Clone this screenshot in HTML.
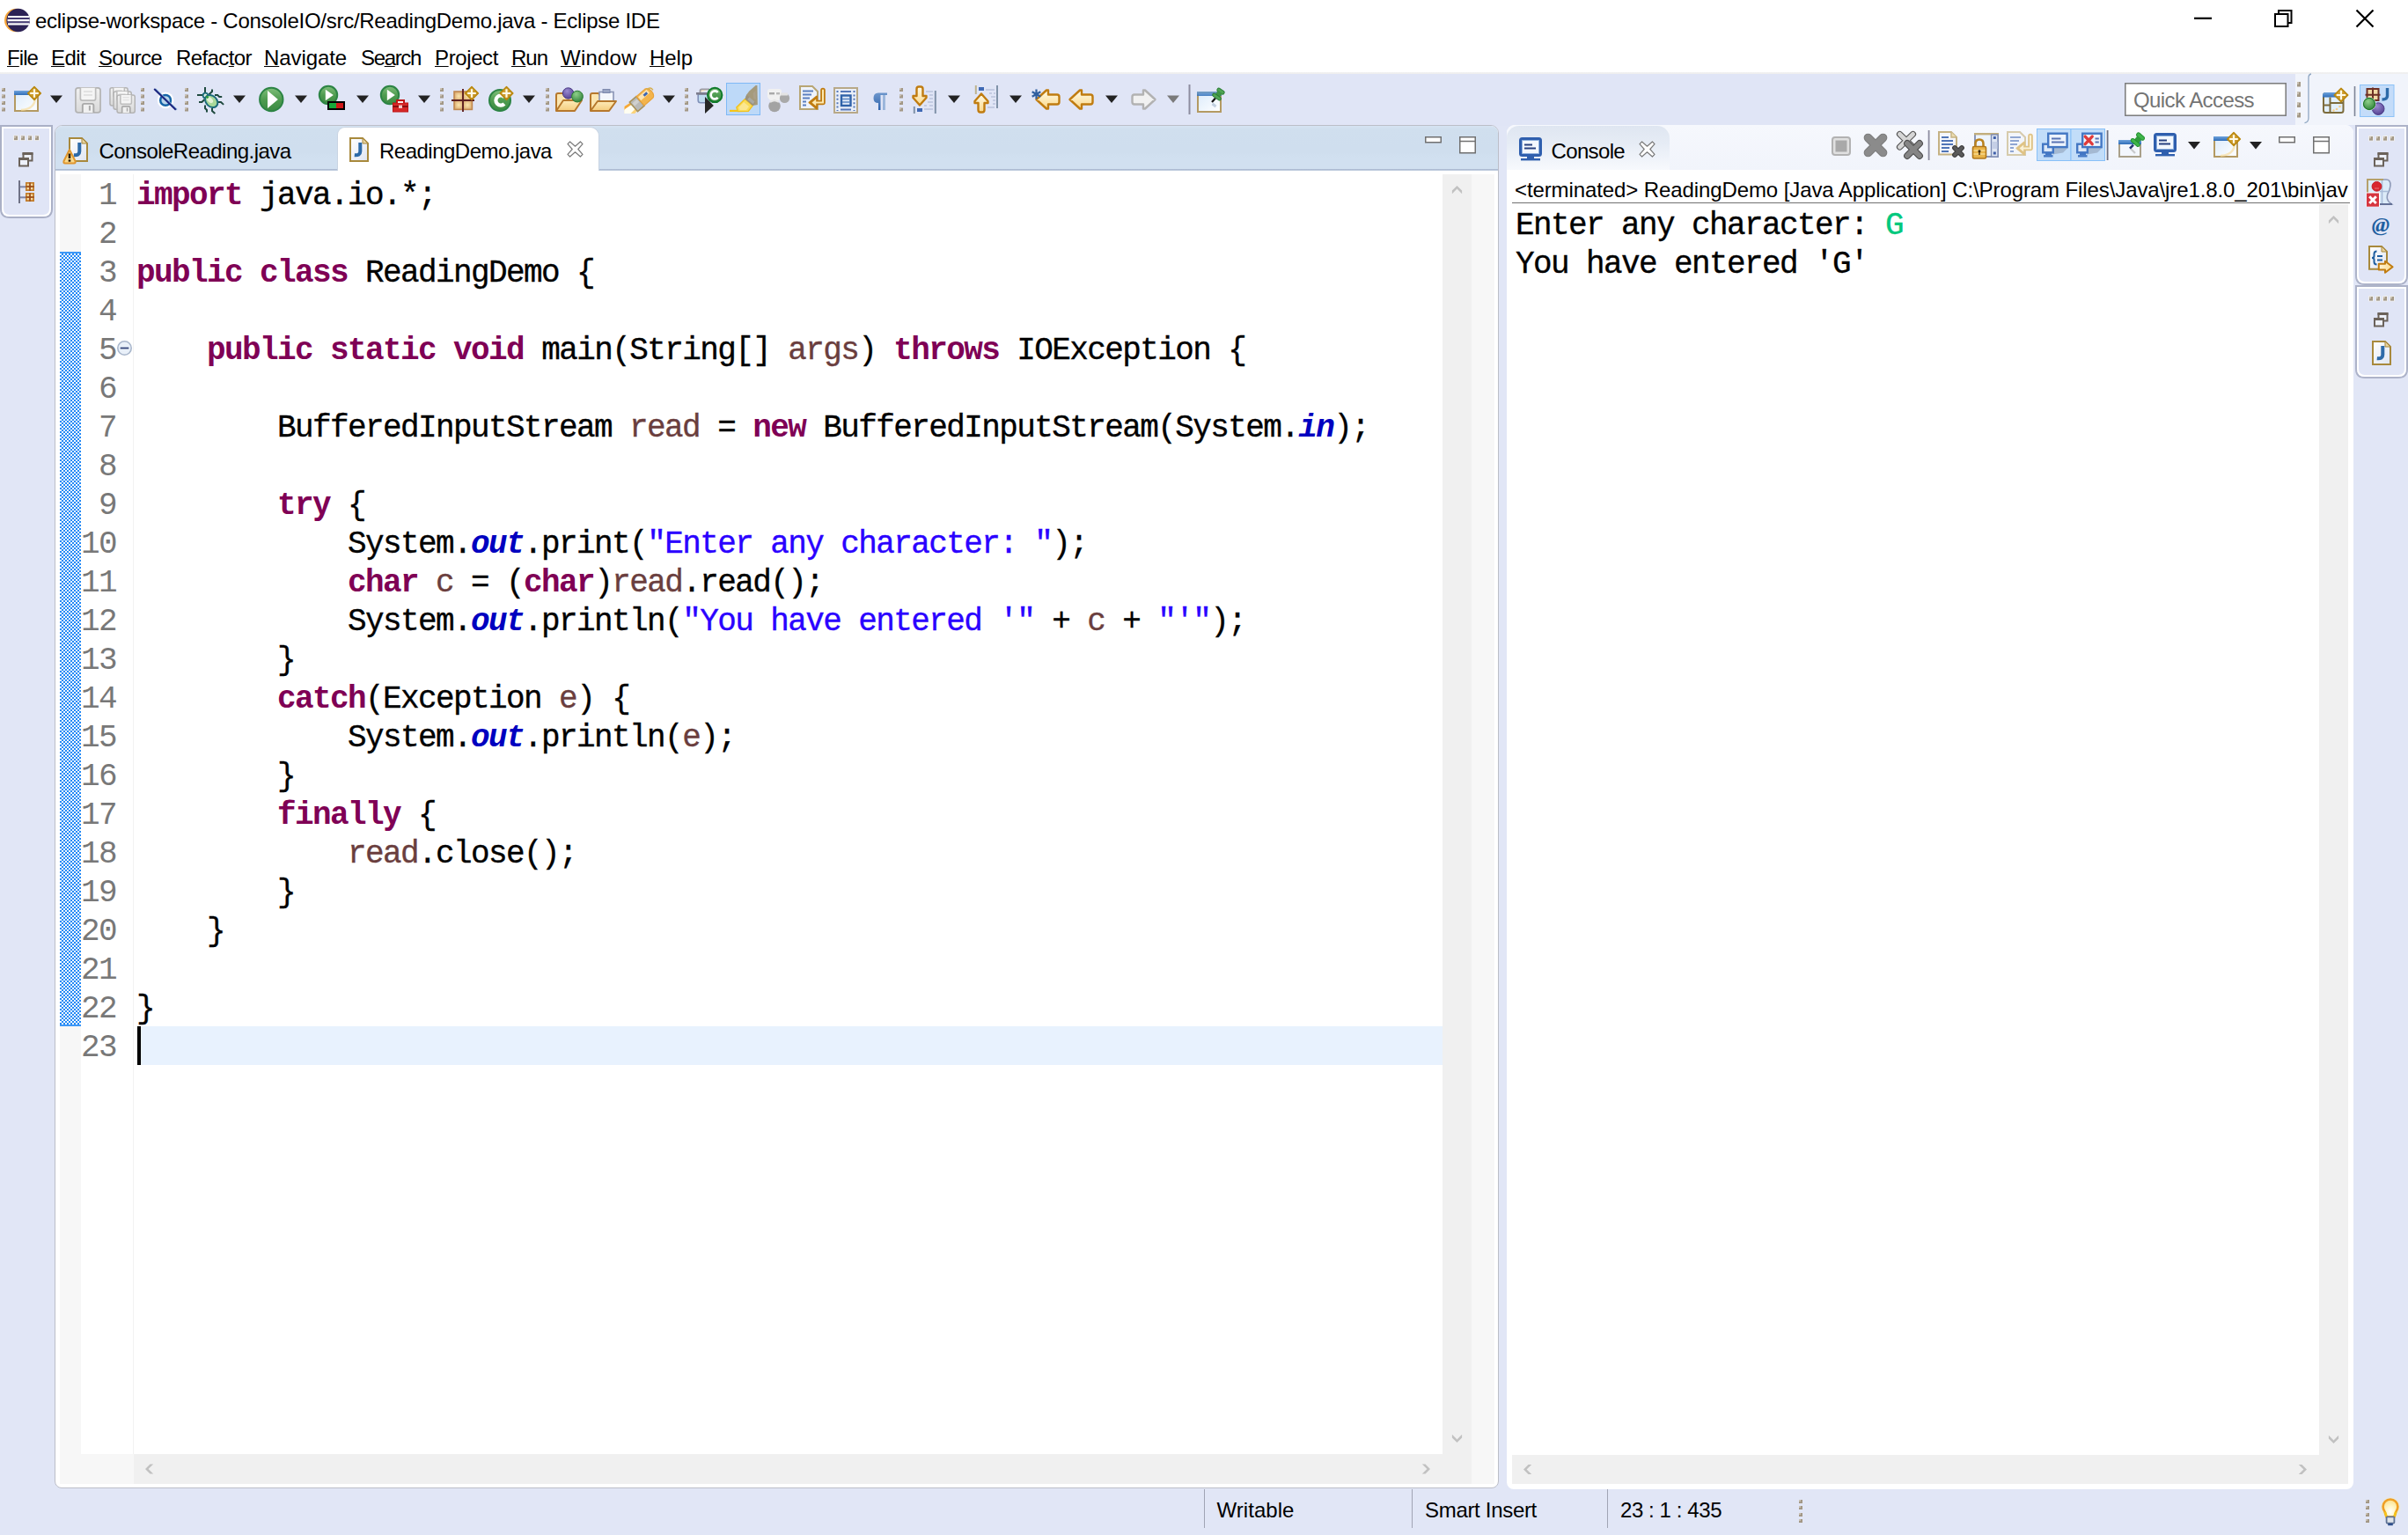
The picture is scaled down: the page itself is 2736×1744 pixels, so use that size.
<!DOCTYPE html>
<html><head><meta charset="utf-8"><title>eclipse-workspace - ConsoleIO/src/ReadingDemo.java - Eclipse IDE</title>
<style>
html,body{margin:0;padding:0;background:#E1E6F6;}
body{width:2736px;height:1744px;overflow:hidden;font-family:"Liberation Sans",sans-serif;}
#root{position:relative;width:2736px;height:1744px;overflow:hidden;background:#E1E6F6;}
.a{position:absolute;box-sizing:border-box;}
.t{position:absolute;white-space:pre;line-height:1;}
u{text-decoration:underline;text-decoration-thickness:1.4px;text-underline-offset:1.4px;}
.code{-webkit-text-stroke:0.35px currentColor;position:absolute;left:155px;white-space:pre;font-family:"Liberation Mono",monospace;font-size:36px;letter-spacing:-1.6px;line-height:44px;height:44px;color:#000;}
.ln{position:absolute;left:62px;width:70px;text-align:right;white-space:pre;font-family:"Liberation Mono",monospace;font-size:36px;letter-spacing:-1.6px;line-height:44px;height:44px;color:#787878;}
.k{color:#7F0055;font-weight:bold;-webkit-text-stroke:0;}
.s{color:#2A00FF;}
.v{color:#6A3E3E;}
.f{color:#0000C0;font-weight:bold;font-style:italic;-webkit-text-stroke:0;}

</style></head><body>
<div id="root">
<div class="a" style="left:0px;top:0px;width:2736px;height:44px;background:#fff;"></div>
<svg class="a" style="left:0px;top:6px" width="40" height="34" viewBox="0 6 40 34"><circle cx="18.2" cy="23" r="13.2" fill="#f6a63a"/><circle cx="20.6" cy="23" r="13.2" fill="#2c2255"/><path d="M9,19 H33 M8.5,23.2 H33.6 M9,27.4 H33" stroke="#fff" stroke-width="2.2"/><path d="M8,21.1 H33.6 M8,25.3 H33.6" stroke="#5a4f8a" stroke-width="1.2" opacity=".8"/></svg>
<span class="t" style="left:40.0px;top:11.7px;font-size:24px;color:#000;letter-spacing:-0.27px;">eclipse-workspace - ConsoleIO/src/ReadingDemo.java - Eclipse IDE</span>
<svg class="a" style="left:2480px;top:0px" width="256" height="44" viewBox="2480 0 256 44"><path d="M2493,20.8 H2513" stroke="#000" stroke-width="2.2"/><rect x="2585" y="16" width="14.5" height="14" fill="none" stroke="#000" stroke-width="2"/><path d="M2589,16 V12 H2603.5 V26 H2599.5" fill="none" stroke="#000" stroke-width="2"/><path d="M2677.5,11.5 L2696.5,30.5 M2696.5,11.5 L2677.5,30.5" stroke="#000" stroke-width="2.2"/></svg>
<div class="a" style="left:0px;top:44px;width:2736px;height:38px;background:#fff;"></div>
<span class="t" style="left:8px;top:53.7px;font-size:24px;letter-spacing:-0.92px"><u>F</u>ile</span>
<span class="t" style="left:58px;top:53.7px;font-size:24px;letter-spacing:-0.59px"><u>E</u>dit</span>
<span class="t" style="left:112px;top:53.7px;font-size:24px;letter-spacing:-0.67px"><u>S</u>ource</span>
<span class="t" style="left:200px;top:53.7px;font-size:24px;letter-spacing:-0.59px">Refac<u>t</u>or</span>
<span class="t" style="left:300px;top:53.7px;font-size:24px;letter-spacing:-0.09px"><u>N</u>avigate</span>
<span class="t" style="left:410px;top:53.7px;font-size:24px;letter-spacing:-1.34px">Se<u>a</u>rch</span>
<span class="t" style="left:494px;top:53.7px;font-size:24px;letter-spacing:-0.39px"><u>P</u>roject</span>
<span class="t" style="left:581px;top:53.7px;font-size:24px;letter-spacing:-1.01px"><u>R</u>un</span>
<span class="t" style="left:637px;top:53.7px;font-size:24px;letter-spacing:0.21px"><u>W</u>indow</span>
<span class="t" style="left:738px;top:53.7px;font-size:24px;letter-spacing:-0.09px"><u>H</u>elp</span>
<div class="a" style="left:0px;top:82px;width:2736px;height:61px;background:linear-gradient(#f1f1f1 0px,#efefef 1.6px,#E0E5F6 2.4px);"></div>
<svg class="a" style="left:0px;top:82px" width="2736" height="60" viewBox="0 82 2736 60"><defs>
<linearGradient id="gGreen" x1="0" y1="0" x2="0" y2="1"><stop offset="0" stop-color="#7fbf7a"/><stop offset=".5" stop-color="#4f9c50"/><stop offset="1" stop-color="#3b8a42"/></linearGradient>
<linearGradient id="gWin" x1="0" y1="0" x2="1" y2="1"><stop offset="0" stop-color="#dcebfb"/><stop offset="1" stop-color="#ffffff"/></linearGradient>
<linearGradient id="gYel" x1="0" y1="0" x2="0" y2="1"><stop offset="0" stop-color="#fffbe8"/><stop offset="1" stop-color="#fbd98a"/></linearGradient>
<linearGradient id="gYelH" x1="0" y1="0" x2="1" y2="0"><stop offset="0" stop-color="#fff6d8"/><stop offset="1" stop-color="#fbd98a"/></linearGradient>
<linearGradient id="gFold" x1="0" y1="0" x2="0" y2="1"><stop offset="0" stop-color="#fdebb8"/><stop offset="1" stop-color="#f5cd7d"/></linearGradient>
<linearGradient id="gGray" x1="0" y1="0" x2="0" y2="1"><stop offset="0" stop-color="#f1f1f1"/><stop offset="1" stop-color="#d9d9d9"/></linearGradient>
<linearGradient id="gBlueT" x1="0" y1="0" x2="0" y2="1"><stop offset="0" stop-color="#6ea3dc"/><stop offset="1" stop-color="#2f6db8"/></linearGradient>
<radialGradient id="gPkg" cx=".5" cy=".5" r=".75"><stop offset="0" stop-color="#fbe6ae"/><stop offset="1" stop-color="#d9a86c"/></radialGradient>
<linearGradient id="gGold" x1="0" y1="0" x2="1" y2="1"><stop offset="0" stop-color="#d9ac3c"/><stop offset="1" stop-color="#c08a1e"/></linearGradient>
<radialGradient id="gPurp" cx=".4" cy=".3" r=".8"><stop offset="0" stop-color="#9a8ad0"/><stop offset="1" stop-color="#4d3a8c"/></radialGradient>
<radialGradient id="gGrnB" cx=".4" cy=".3" r=".8"><stop offset="0" stop-color="#8fd08a"/><stop offset="1" stop-color="#2a7d34"/></radialGradient>
<linearGradient id="gPil" x1="0" y1="0" x2="0" y2="1"><stop offset="0" stop-color="#6e97cc"/><stop offset="1" stop-color="#2d62ad"/></linearGradient>
</defs><rect x="2" y="100" width="4" height="4" fill="#a39886"/><rect x="2" y="100" width="2.0" height="2.0" fill="#c9c0b2"/><rect x="2" y="107.5" width="4" height="4" fill="#a39886"/><rect x="2" y="107.5" width="2.0" height="2.0" fill="#c9c0b2"/><rect x="2" y="115" width="4" height="4" fill="#a39886"/><rect x="2" y="115" width="2.0" height="2.0" fill="#c9c0b2"/><rect x="2" y="122.5" width="4" height="4" fill="#a39886"/><rect x="2" y="122.5" width="2.0" height="2.0" fill="#c9c0b2"/><rect x="17" y="104" width="26" height="22" fill="url(#gWin)" stroke="#b49a62" stroke-width="2"/><rect x="16" y="103" width="28" height="5" fill="url(#gBlueT)"/><path d="M40,112 Q39,124 24,125" stroke="#f7dc9a" stroke-width="2.5" fill="none" opacity=".65"/><polygon points="39,98.6 46.4,106 39,113.4 31.6,106" fill="url(#gGold)" stroke="#b8860b" stroke-width="1.4" stroke-linejoin="round"/><path d="M39,101.19999999999999V110.80000000000001M34.2,106H43.8" stroke="#fffbe8" stroke-width="2.2" fill="none"/><polygon points="57,108.5 71,108.5 64.0,117.0" fill="#222"/><rect x="85.95" y="99.85" width="28.10" height="28.10" rx="2.88" fill="url(#gGray)" stroke="#b3b3b3" stroke-width="1.7"/><path d="M91.36,99.85 V112.11 Q91.36,114.10 93.34,114.10 H106.66 Q108.64,114.10 108.64,112.11 V99.85" fill="#f5f5f5" stroke="#bcbcbc" stroke-width="1.7"/><path d="M95.03,103.97 H104.97 M95.03,107.94 H104.97" stroke="#dcdcdc" stroke-width="1.39"/><path d="M93.84,127.95 V119.86 Q93.84,117.87 95.83,117.87 H104.37 Q106.36,117.87 106.36,119.86 V127.95" fill="#f0f0f0" stroke="#a9a9a9" stroke-width="1.9"/><rect x="100.89" y="120.06" width="1.99" height="5.56" fill="#a8a8a8"/><rect x="124.95" y="99.75" width="20.20" height="20.20" rx="2.24" fill="url(#gGray)" stroke="#b3b3b3" stroke-width="1.5"/><path d="M128.76,99.75 V108.55 Q128.76,109.99 130.20,109.99 H139.90 Q141.34,109.99 141.34,108.55 V99.75" fill="#f5f5f5" stroke="#bcbcbc" stroke-width="1.5"/><path d="M131.43,102.62 H138.67 M131.43,105.51 H138.67" stroke="#dcdcdc" stroke-width="1.01"/><path d="M130.57,119.95 V114.19 Q130.57,112.74 132.01,112.74 H138.23 Q139.68,112.74 139.68,114.19 V119.95" fill="#f0f0f0" stroke="#a9a9a9" stroke-width="1.7"/><rect x="135.70" y="114.33" width="1.45" height="4.05" fill="#a8a8a8"/><rect x="129.05" y="103.95" width="20.20" height="20.20" rx="2.24" fill="url(#gGray)" stroke="#b3b3b3" stroke-width="1.5"/><path d="M132.86,103.95 V112.75 Q132.86,114.19 134.30,114.19 H144.00 Q145.44,114.19 145.44,112.75 V103.95" fill="#f5f5f5" stroke="#bcbcbc" stroke-width="1.5"/><path d="M135.53,106.82 H142.77 M135.53,109.71 H142.77" stroke="#dcdcdc" stroke-width="1.01"/><path d="M134.67,124.15 V118.39 Q134.67,116.94 136.11,116.94 H142.33 Q143.78,116.94 143.78,118.39 V124.15" fill="#f0f0f0" stroke="#a9a9a9" stroke-width="1.7"/><rect x="139.80" y="118.53" width="1.45" height="4.05" fill="#a8a8a8"/><rect x="133.05" y="107.95" width="20.20" height="20.20" rx="2.24" fill="url(#gGray)" stroke="#b3b3b3" stroke-width="1.5"/><path d="M136.86,107.95 V116.75 Q136.86,118.19 138.30,118.19 H148.00 Q149.44,118.19 149.44,116.75 V107.95" fill="#f5f5f5" stroke="#bcbcbc" stroke-width="1.5"/><path d="M139.53,110.82 H146.77 M139.53,113.71 H146.77" stroke="#dcdcdc" stroke-width="1.01"/><path d="M138.67,128.15 V122.39 Q138.67,120.94 140.11,120.94 H146.33 Q147.78,120.94 147.78,122.39 V128.15" fill="#f0f0f0" stroke="#a9a9a9" stroke-width="1.7"/><rect x="143.80" y="122.53" width="1.45" height="4.05" fill="#a8a8a8"/><rect x="160" y="100" width="4" height="4" fill="#a39886"/><rect x="160" y="100" width="2.0" height="2.0" fill="#c9c0b2"/><rect x="160" y="107.5" width="4" height="4" fill="#a39886"/><rect x="160" y="107.5" width="2.0" height="2.0" fill="#c9c0b2"/><rect x="160" y="115" width="4" height="4" fill="#a39886"/><rect x="160" y="115" width="2.0" height="2.0" fill="#c9c0b2"/><rect x="160" y="122.5" width="4" height="4" fill="#a39886"/><rect x="160" y="122.5" width="2.0" height="2.0" fill="#c9c0b2"/><circle cx="188.1" cy="113.9" r="9.3" fill="#fff"/><circle cx="188.1" cy="113.9" r="5.9" fill="#b8d4ea" stroke="#1565a8" stroke-width="2.5"/><path d="M176.6,101 L201,124.6" stroke="#8ab4d8" stroke-width="1.6"/><path d="M175.2,101 L199.8,124.7" stroke="#1a237e" stroke-width="2"/><rect x="210" y="100" width="4" height="4" fill="#a39886"/><rect x="210" y="100" width="2.0" height="2.0" fill="#c9c0b2"/><rect x="210" y="107.5" width="4" height="4" fill="#a39886"/><rect x="210" y="107.5" width="2.0" height="2.0" fill="#c9c0b2"/><rect x="210" y="115" width="4" height="4" fill="#a39886"/><rect x="210" y="115" width="2.0" height="2.0" fill="#c9c0b2"/><rect x="210" y="122.5" width="4" height="4" fill="#a39886"/><rect x="210" y="122.5" width="2.0" height="2.0" fill="#c9c0b2"/><g stroke="#1f4a3f" stroke-width="2" fill="none" stroke-linecap="square" stroke-linejoin="miter"><path d="M233,100 V105"/><path d="M241,102.4 V104 L238.2,106.6"/><path d="M225,108 H230"/><path d="M227,116 H229.4 L232,113.4"/><path d="M233,120.4 V123 L235,125 V126.4"/><path d="M241,124 V126 L243.6,128.4"/><path d="M245,108 H247.2 L249.2,110 H251.2"/><path d="M248.6,116 H251 L253.4,118.2"/></g><circle cx="233.4" cy="108.4" r="2.8" fill="#dfeee0" stroke="#1d6b7a" stroke-width="1.8"/><ellipse cx="240.2" cy="115" rx="8" ry="6.1" transform="rotate(44 240.2 115)" fill="#a9d99a" stroke="#1d6b7a" stroke-width="2"/><ellipse cx="238.4" cy="113.4" rx="4.4" ry="2.6" transform="rotate(44 238.4 113.4)" fill="#e9f3dc" opacity=".9"/><path d="M234.4,109.4 L236.6,111.2" stroke="#2a9a3c" stroke-width="2.4"/><polygon points="265,108.5 279,108.5 272.0,117.0" fill="#222"/><circle cx="308.3" cy="113" r="13.2" fill="url(#gGreen)" stroke="#2c8444" stroke-width="2"/><polygon points="304.0,103 304.0,123 315.90000000000003,113" fill="#fff"/><polygon points="335,108.5 349,108.5 342.0,117.0" fill="#222"/><circle cx="373" cy="108" r="10.2" fill="url(#gGreen)" stroke="#2c8444" stroke-width="2"/><polygon points="369.8,101.7 369.8,114.3 378.8,108" fill="#fff"/><rect x="373" y="116" width="18" height="8" fill="#d01818" stroke="#000" stroke-width="2"/><rect x="374" y="117" width="8" height="6" fill="#18a83a"/><polygon points="405,108.5 419,108.5 412.0,117.0" fill="#222"/><circle cx="443" cy="108" r="10.2" fill="url(#gGreen)" stroke="#2c8444" stroke-width="2"/><polygon points="439.8,101.7 439.8,114.3 448.8,108" fill="#fff"/><rect x="446.5" y="117" width="17" height="10" fill="#d62828" stroke="#c01616" stroke-width="1"/><path d="M451,117 V114 H459 V117" stroke="#c01616" stroke-width="2" fill="#fbeaea"/><path d="M446.5,121 H463.5" stroke="#8a0f0f" stroke-width="2"/><rect x="453" y="119.5" width="4" height="3.5" fill="#f4c6c6"/><polygon points="475,108.5 489,108.5 482.0,117.0" fill="#222"/><rect x="500" y="100" width="4" height="4" fill="#a39886"/><rect x="500" y="100" width="2.0" height="2.0" fill="#c9c0b2"/><rect x="500" y="107.5" width="4" height="4" fill="#a39886"/><rect x="500" y="107.5" width="2.0" height="2.0" fill="#c9c0b2"/><rect x="500" y="115" width="4" height="4" fill="#a39886"/><rect x="500" y="115" width="2.0" height="2.0" fill="#c9c0b2"/><rect x="500" y="122.5" width="4" height="4" fill="#a39886"/><rect x="500" y="122.5" width="2.0" height="2.0" fill="#c9c0b2"/><rect x="516" y="104" width="20.4" height="20.4" fill="#d9a86c" stroke="#c08850" stroke-width="1.6"/><rect x="517.2" y="105.2" width="8" height="8" fill="url(#gPkg)"/><rect x="527" y="105.2" width="8.4" height="8" fill="url(#gPkg)"/><rect x="517.2" y="115" width="8" height="8.4" fill="url(#gPkg)"/><rect x="527" y="115" width="8.4" height="8.4" fill="url(#gPkg)"/><path d="M526,101 V127 M513,114 H539" stroke="#5e2020" stroke-width="1.9"/><polygon points="536,98.6 543.4,106 536,113.4 528.6,106" fill="url(#gGold)" stroke="#b8860b" stroke-width="1.4" stroke-linejoin="round"/><path d="M536,101.19999999999999V110.80000000000001M531.2,106H540.8" stroke="#fffbe8" stroke-width="2.2" fill="none"/><circle cx="568" cy="114" r="12" fill="url(#gGreen)" stroke="#2c8444" stroke-width="2"/><path d="M573,110.2 A5.6,5.6 0 1 0 573,118" stroke="#fff" stroke-width="4.2" fill="none"/><polygon points="575.5,98.6 582.9,106 575.5,113.4 568.1,106" fill="url(#gGold)" stroke="#b8860b" stroke-width="1.4" stroke-linejoin="round"/><path d="M575.5,101.19999999999999V110.80000000000001M570.7,106H580.3" stroke="#fffbe8" stroke-width="2.2" fill="none"/><polygon points="594,108.5 608,108.5 601.0,117.0" fill="#222"/><rect x="620" y="100" width="4" height="4" fill="#a39886"/><rect x="620" y="100" width="2.0" height="2.0" fill="#c9c0b2"/><rect x="620" y="107.5" width="4" height="4" fill="#a39886"/><rect x="620" y="107.5" width="2.0" height="2.0" fill="#c9c0b2"/><rect x="620" y="115" width="4" height="4" fill="#a39886"/><rect x="620" y="115" width="2.0" height="2.0" fill="#c9c0b2"/><rect x="620" y="122.5" width="4" height="4" fill="#a39886"/><rect x="620" y="122.5" width="2.0" height="2.0" fill="#c9c0b2"/><path d="M632,126 V108 Q632,106 634,106 H641 L643,109 H654 V114" fill="#fbe6b0" stroke="#b6782c" stroke-width="2" stroke-linejoin="round"/><path d="M632,126 L640,114 H661 L653,126 Z" fill="url(#gFold)" stroke="#b6782c" stroke-width="2" stroke-linejoin="round"/><circle cx="645.6" cy="106" r="6.2" fill="url(#gPurp)" stroke="#4a3a86" stroke-width="1"/><circle cx="656" cy="109.6" r="6.4" fill="url(#gGrnB)" stroke="#2b7a35" stroke-width="1"/><path d="M671,126 V108 Q671,106 673,106 H680 L682,109 H692 V114" fill="#fbe6b0" stroke="#b6782c" stroke-width="2" stroke-linejoin="round"/><rect x="681" y="104.5" width="16" height="11" fill="#f4f7fc" stroke="#8a94b4" stroke-width="1.6"/><rect x="685" y="101.5" width="8" height="4" fill="#9aa6c4" stroke="#7d89ad" stroke-width="1"/><path d="M671,126 L679,115 H700 L692,126 Z" fill="url(#gFold)" stroke="#b6782c" stroke-width="2" stroke-linejoin="round"/><clipPath id="cpFl"><rect x="709.5" y="98" width="34" height="31"/></clipPath><g clip-path="url(#cpFl)"><g transform="translate(727.5,114.8) rotate(-41)"><path d="M-10,-6 L-30,-9 V9 L-10,6 Z" fill="#fff3c0"/><path d="M-10,-6 L-30,-9 V-5 L-10,-3 Z" fill="#f6a838"/><path d="M-10,-3.5 L-30,-5.5 V4 L-10,3Z" fill="#fffef2"/><path d="M-10,3 L-30,5 V9 L-10,6Z" fill="#fbd27a"/><rect x="-10" y="-7" width="10" height="14" fill="#b9b9b7" stroke="#a8925c" stroke-width="1.6"/><rect x="-8.5" y="-4" width="7" height="4" fill="#d0d0ce"/><path d="M0,-6.8 H13 Q17,-6 17,0 Q17,6 13,6.8 H0 Z" fill="#f3b44c" stroke="#e8a23a" stroke-width="1.2"/><path d="M1,-2.5 H14" stroke="#fde3b0" stroke-width="5"/><rect x="7" y="-3.4" width="5" height="2.8" fill="#3d66b4"/><path d="M14,-5 Q20,-5 19,0" stroke="#d6b050" stroke-width="1.6" fill="none"/></g></g><polygon points="753,108.5 767,108.5 760.0,117.0" fill="#222"/><rect x="778" y="100" width="4" height="4" fill="#a39886"/><rect x="778" y="100" width="2.0" height="2.0" fill="#c9c0b2"/><rect x="778" y="107.5" width="4" height="4" fill="#a39886"/><rect x="778" y="107.5" width="2.0" height="2.0" fill="#c9c0b2"/><rect x="778" y="115" width="4" height="4" fill="#a39886"/><rect x="778" y="115" width="2.0" height="2.0" fill="#c9c0b2"/><rect x="778" y="122.5" width="4" height="4" fill="#a39886"/><rect x="778" y="122.5" width="2.0" height="2.0" fill="#c9c0b2"/><path d="M795.5,105 V103 Q795.5,101.4 797.5,101.4 H806" stroke="#9a9aa2" stroke-width="1.8" fill="#f4e3c8"/><path d="M793.2,107 H806 V116.7 H796 Q793.2,116.7 793.2,114 Z" fill="#c0dcf0" stroke="#8090b8" stroke-width="1.6"/><rect x="791" y="105" width="16" height="2.6" fill="#7c7c8c"/><polygon points="801,110 801,128.9 810.9,119.9" fill="#262626"/><circle cx="812.2" cy="107.9" r="8.2" fill="url(#gGreen)" stroke="#0f7a2a" stroke-width="2"/><path d="M815.6,105 A4.5,4.5 0 1 0 815.6,110.8" stroke="#fff" stroke-width="2.7" fill="none"/><rect x="825.5" y="94.5" width="38" height="36" fill="#bdd9f8" stroke="#7fb9f6" stroke-width="1"/><path d="M829,125.9 H839" stroke="#f5c518" stroke-width="2.2"/><polygon points="846.5,112.4 855.3,119.9 850.3,126.4 838.3,126.6 836.8,121.9" fill="#f9dc58" stroke="#f2c21c" stroke-width="1.4" stroke-linejoin="round"/><polygon points="845,116 851,121 848,125 840.5,125 839.5,122" fill="#fce99a" opacity=".85"/><polygon points="860.4,97 860.8,119 855.3,119.9 846.5,112.4 848.3,107.6 851.3,103.6 858.6,97" fill="#a59a7c"/><polygon points="848.3,107.6 846.5,112.4 855.3,119.9 858.2,116.6" fill="#9b927a"/><polygon points="851.5,110.2 849.3,112.9 855.6,118.2 857.4,115.6" fill="#a9a9a2"/><polygon points="855.5,106 858.5,103 859,113 856.5,112" fill="#aaa08a"/><path d="M872,104 Q872,101 875,101 H885 Q888,101 888,104 V110 Q886,115 880,115 Q874,115 872,110Z" fill="#f1f1f1"/><rect x="874" y="105" width="6" height="2.4" fill="#a9a9a9"/><rect x="882" y="105" width="4" height="2.4" fill="#b9b9b9"/><circle cx="880" cy="120.5" r="6.8" fill="#a3a3a3"/><path d="M875,116 Q880,112.5 885,116" stroke="#e6e6e6" stroke-width="2" fill="none"/><circle cx="891.5" cy="111.5" r="5.6" fill="#a9a9a9"/><rect x="887" y="105.5" width="8" height="3" fill="#e4e4e4"/><path d="M909,98 H923 L929,104 V124 H909 Z" fill="#eef3fb" stroke="#b8a674" stroke-width="2"/><path d="M912,103.5 H924 M912,107.5 H922 M912,111.5 H920 M912,115.5 H916 M912,119.5 H916" stroke="#5a7fc0" stroke-width="2"/><path d="M935,102.5 V116.5 H928 M935,102.5" stroke="#c07c10" stroke-width="5.6" fill="none" stroke-linejoin="round" stroke-linecap="round"/><polygon points="919.5,116.5 928,109.5 928,123.5" fill="#c07c10" stroke="#c07c10" stroke-width="2" stroke-linejoin="round"/><path d="M935,102.5 V116.5 H927" stroke="#fde9b0" stroke-width="2" fill="none" stroke-linecap="round"/><polygon points="922.5,116.5 927.2,112.6 927.2,120.4" fill="#fde9b0"/><rect x="948" y="100" width="26" height="28" fill="#e9eef8" stroke="#b8a988" stroke-width="2"/><rect x="956" y="108.5" width="10.5" height="11.5" fill="#dfe9f7" stroke="#2f62a8" stroke-width="2.4"/><path d="M957,112.5 H966 M957,116 H966" stroke="#5b86c4" stroke-width="1.6"/><path d="M955,104 H967 M955,124.5 H967" stroke="#5577b8" stroke-width="2"/><path d="M951.5,103 V126 M970.5,103 V126" stroke="#5577b8" stroke-width="2" stroke-dasharray="2 2.4"/><path d="M1008,105.5 H998 Q992.5,105.5 992.5,111.5 Q992.5,117 998,117 V125 H1000.5 V108 H1003.5 V125 H1006 V108 H1008 Z" fill="url(#gPil)"/><rect x="1003.5" y="108" width="2.5" height="17" fill="#9db8dc"/><rect x="1022" y="100" width="4" height="4" fill="#a39886"/><rect x="1022" y="100" width="2.0" height="2.0" fill="#c9c0b2"/><rect x="1022" y="107.5" width="4" height="4" fill="#a39886"/><rect x="1022" y="107.5" width="2.0" height="2.0" fill="#c9c0b2"/><rect x="1022" y="115" width="4" height="4" fill="#a39886"/><rect x="1022" y="115" width="2.0" height="2.0" fill="#c9c0b2"/><rect x="1022" y="122.5" width="4" height="4" fill="#a39886"/><rect x="1022" y="122.5" width="2.0" height="2.0" fill="#c9c0b2"/><path d="M1045.0,119.5 L1037.5,111 L1037.5,109 L1041.5,109 L1041.5,101 Q1041.5,98.5 1044,98.5 L1046,98.5 Q1048.5,98.5 1048.5,101 L1048.5,109 L1052.5,109 L1052.5,111 Z" fill="url(#gYel)" stroke="#c07c10" stroke-width="2.4" stroke-linejoin="round"/><path d="M1052,104 H1060 M1056,108 H1060 M1056,112 H1060 M1054,116 H1060 M1050,120 H1053 M1056,120 H1060 M1050,124 H1060" stroke="#c3cbe2" stroke-width="2"/><rect x="1061.8" y="103" width="2" height="26" fill="#8092a8"/><rect x="1037.8" y="121" width="2" height="8" fill="#8092a8"/><rect x="1042" y="123" width="6" height="4" fill="#3f69b4"/><polygon points="1077,108.5 1091,108.5 1084.0,117.0" fill="#222"/><path d="M1120,102 H1130 M1124,106 H1127 M1129,106 H1131 M1126,110 H1131 M1128,114 H1131 M1128,118 H1131 M1122,122 H1130" stroke="#c3cbe2" stroke-width="2"/><rect x="1132" y="97" width="2" height="26" fill="#8092a8"/><rect x="1107.8" y="97" width="2" height="10" fill="#bdb38e"/><rect x="1112" y="99" width="6" height="4" fill="#3f69b4"/><path d="M1115.0,106.5 L1107.5,115 L1107.5,117 L1111.5,117 L1111.5,125 Q1111.5,127.5 1114,127.5 L1116,127.5 Q1118.5,127.5 1118.5,125 L1118.5,117 L1122.5,117 L1122.5,115 Z" fill="url(#gYel)" stroke="#c07c10" stroke-width="2.4" stroke-linejoin="round"/><polygon points="1147,108.5 1161,108.5 1154.0,117.0" fill="#222"/><path d="M1177.5,113.0 L1189,102.5 L1191,102.5 L1191,107.5 L1201,107.5 Q1203.5,107.5 1203.5,110 L1203.5,116 Q1203.5,118.5 1201,118.5 L1191,118.5 L1191,123.5 L1189,123.5 Z" fill="url(#gYel)" stroke="#c07c10" stroke-width="2.4" stroke-linejoin="round"/><path d="M1177.5,101.5 V112.5 M1172.7,104.2 L1182.3,109.8 M1182.3,104.2 L1172.7,109.8" stroke="#2f5f9f" stroke-width="2.2"/><path d="M1215.5,113.0 L1227,102.5 L1229,102.5 L1229,107.5 L1239,107.5 Q1241.5,107.5 1241.5,110 L1241.5,116 Q1241.5,118.5 1239,118.5 L1229,118.5 L1229,123.5 L1227,123.5 Z" fill="url(#gYel)" stroke="#c07c10" stroke-width="2.4" stroke-linejoin="round"/><polygon points="1256,108.5 1270,108.5 1263.0,117.0" fill="#222"/><path d="M1312.5,113.0 L1301,102.5 L1299,102.5 L1299,107.5 L1289,107.5 Q1286.5,107.5 1286.5,110 L1286.5,116 Q1286.5,118.5 1289,118.5 L1299,118.5 L1299,123.5 L1301,123.5 Z" fill="#f1f1f1" stroke="#b2b2b2" stroke-width="2.4" stroke-linejoin="round"/><polygon points="1326,108.5 1340,108.5 1333.0,117.0" fill="#7a7a7a"/><rect x="1350.5" y="96" width="2" height="34" fill="#8d8da0"/><rect x="1361" y="105" width="26" height="22" fill="url(#gWin)" stroke="#b49a62" stroke-width="2"/><rect x="1360" y="104" width="28" height="5" fill="url(#gBlueT)" opacity=".85"/><path d="M1377,116 L1381,111.5" stroke="#111" stroke-width="2.2"/><path d="M1377.5,118 L1381.5,121" stroke="#9fb4cc" stroke-width="3" opacity=".6"/><g transform="rotate(35 1385 106.5)"><rect x="1380.5" y="101" width="9" height="4" rx="2" fill="#4fa552" stroke="#2a7d34" stroke-width="1"/><rect x="1382" y="104.5" width="6" height="5" fill="#3f9444"/><rect x="1379.5" y="109" width="11" height="3.6" rx="1.8" fill="#4fa552" stroke="#2a7d34" stroke-width="1"/></g><rect x="2608" y="84" width="128" height="58" fill="#f1f4fb"/><rect x="2414.8" y="94.8" width="182.4" height="36.4" fill="#fff" stroke="#7a7a7a" stroke-width="1.5"/><rect x="2610" y="93" width="4" height="5.5" fill="#a39886"/><rect x="2610" y="93" width="2.0" height="2.75" fill="#c9c0b2"/><rect x="2610" y="104.5" width="4" height="5.5" fill="#a39886"/><rect x="2610" y="104.5" width="2.0" height="2.75" fill="#c9c0b2"/><rect x="2610" y="116.5" width="4" height="5.5" fill="#a39886"/><rect x="2610" y="116.5" width="2.0" height="2.75" fill="#c9c0b2"/><rect x="2610" y="128" width="4" height="5.5" fill="#a39886"/><rect x="2610" y="128" width="2.0" height="2.75" fill="#c9c0b2"/><path d="M2626,84 Q2623,84.5 2623,88.5 V134 Q2623,139 2618.5,139.6" stroke="#8fa6c2" stroke-width="1.3" fill="none"/><rect x="2640" y="106" width="22.5" height="22" rx="2.5" fill="#e2f0fc" stroke="#7d6c3c" stroke-width="2"/><path d="M2639,110.5 V108 Q2639,105 2642,105 H2656 V110.5 Z" fill="url(#gBlueT)"/><path d="M2647.5,110.5 V128 M2640,119.5 H2647.5 M2647.5,117 H2662" stroke="#7d6c3c" stroke-width="2"/><circle cx="2651.5" cy="125.5" r="1.2" fill="#f6cf8e"/><circle cx="2655" cy="124" r="1.3" fill="#f6cf8e"/><circle cx="2658.5" cy="121" r="1.3" fill="#f6cf8e"/><polygon points="2660,100.2 2667.8,108 2660,115.8 2652.2,108" fill="url(#gGold)" stroke="#b8860b" stroke-width="1.4" stroke-linejoin="round"/><path d="M2660,102.8V113.2M2654.7999999999997,108H2665.2000000000003" stroke="#fffbe8" stroke-width="2.2" fill="none"/><rect x="2674.7" y="98" width="1.6" height="34" fill="#7d8496"/><rect x="2681.5" y="96.5" width="38.5" height="36" fill="#c4dcf9" stroke="#8cc2f8" stroke-width="1"/><rect x="2689.5" y="101" width="13" height="13" fill="#f2d9a4" stroke="#6d2f24" stroke-width="2"/><path d="M2696,99.5 V114 M2687.5,107.8 H2704.5" stroke="#6d2f24" stroke-width="2"/><path d="M2712.5,100 V109 Q2712.5,113 2706.5,113" stroke="#2d6aa8" stroke-width="3.4" fill="none"/><circle cx="2702.2" cy="123.6" r="6.8" fill="url(#gPurp)" stroke="#4a3a86" stroke-width="1"/><circle cx="2692" cy="118" r="7.6" fill="#fff"/><circle cx="2692" cy="118" r="6.6" fill="url(#gGrnB)" stroke="#1f7a2c" stroke-width="1.2"/></svg><span class="t" style="left:2424.0px;top:101.7px;font-size:24px;color:#747474;letter-spacing:-0.59px;">Quick Access</span>
<svg class="a" style="left:0px;top:140px" width="62" height="110" viewBox="0 140 62 110"><path d="M1.0,143.0 H59.0 V237.0 Q59.0,247.0 49.0,247.0 H11.0 Q1.0,247.0 1.0,237.0 Z" fill="#e0e5f6" stroke="#aab0c6" stroke-width="2"/><path d="M3,145 H57 V237 Q57,245 49,245 H11 Q3,245 3,237 Z" fill="none" stroke="#fff" stroke-width="2"/><rect x="15" y="153.5" width="6" height="6.5" fill="#f1f0ee" opacity=".8"/><rect x="16" y="154.5" width="4" height="4.6" fill="#a39886"/><rect x="16" y="154.5" width="2" height="2.3" fill="#c9c0b2"/><rect x="23" y="153.5" width="6" height="6.5" fill="#f1f0ee" opacity=".8"/><rect x="24" y="154.5" width="4" height="4.6" fill="#a39886"/><rect x="24" y="154.5" width="2" height="2.3" fill="#c9c0b2"/><rect x="31" y="153.5" width="6" height="6.5" fill="#f1f0ee" opacity=".8"/><rect x="32" y="154.5" width="4" height="4.6" fill="#a39886"/><rect x="32" y="154.5" width="2" height="2.3" fill="#c9c0b2"/><rect x="39" y="153.5" width="6" height="6.5" fill="#f1f0ee" opacity=".8"/><rect x="40" y="154.5" width="4" height="4.6" fill="#a39886"/><rect x="40" y="154.5" width="2" height="2.3" fill="#c9c0b2"/><rect x="26.5" y="174.5" width="10" height="8" fill="#eef1fa" stroke="#6b625a" stroke-width="2"/><rect x="25.5" y="173" width="12" height="3" fill="#6b625a"/><rect x="22" y="180.5" width="10" height="8" fill="#eef1fa" stroke="#6b625a" stroke-width="2"/><rect x="21" y="179" width="12" height="3" fill="#6b625a"/><rect x="21" y="205" width="2" height="26" fill="#6f7286"/><rect x="23" y="211.3" width="6" height="2" fill="#7f86a4"/><rect x="23" y="223.3" width="6" height="2" fill="#7f86a4"/><rect x="29" y="207" width="10" height="10" fill="#c27d2c"/><rect x="30.7" y="208.7" width="2.2" height="2.2" fill="#f6dca8"/><rect x="35" y="208.7" width="2.2" height="2.2" fill="#f6dca8"/><rect x="30.7" y="213" width="2.2" height="2.2" fill="#f6dca8"/><rect x="35" y="213" width="2.2" height="2.2" fill="#f6dca8"/><path d="M34,207 V217 M29,212 H39" stroke="#8a3d1c" stroke-width="1"/><rect x="29" y="219" width="10" height="10" fill="#c27d2c"/><rect x="30.7" y="220.7" width="2.2" height="2.2" fill="#f6dca8"/><rect x="35" y="220.7" width="2.2" height="2.2" fill="#f6dca8"/><rect x="30.7" y="225" width="2.2" height="2.2" fill="#f6dca8"/><rect x="35" y="225" width="2.2" height="2.2" fill="#f6dca8"/><path d="M34,219 V229 M29,224 H39" stroke="#8a3d1c" stroke-width="1"/></svg>
<div class="a" style="left:62px;top:142px;width:1641px;height:1549px;background:#fff;border:1px solid #bcbec8;border-radius:9px 9px 8px 8px;overflow:hidden;"><div class="a" style="left:0px;top:0px;width:1639px;height:51px;background:linear-gradient(#d6e3f2 0px,#D0DFEE 4px,#CFDEEE 22px,#CFDEEE 30px,#D1E0F0 36px,#D1E0F0 48.6px,#adbbd2 49.4px,#b0bed5 50.3px,#e3ebf5 51px);"></div></div>
<svg class="a" style="left:70px;top:154px" width="34" height="34" viewBox="70 154 34 34"><defs><linearGradient id="gPage" x1="0" y1="0" x2="1" y2="1"><stop offset="0" stop-color="#ffffff"/><stop offset="1" stop-color="#dfe5f2"/></linearGradient></defs><path d="M79,157 H93 L99,163 V183 H79 Z" fill="url(#gPage)" stroke="#a8893c" stroke-width="2" stroke-linejoin="miter"/><path d="M93,157 V163 H99 Z" fill="#e8d3a0" stroke="#a8893c" stroke-width="1"/><path d="M90.3,162 V172 Q90.3,176.8 83.8,176.2" stroke="#2d6aa8" stroke-width="4" fill="none"/><path d="M79,170 L85.5,183 Q86.2,185.5 84,185.5 H74 Q71.8,185.5 72.5,183 Z" fill="#f9d98a" stroke="#e0962e" stroke-width="2" stroke-linejoin="round"/><path d="M79,174.5 V180" stroke="#2a1a00" stroke-width="2.6"/><rect x="77.7" y="181.3" width="2.6" height="2.4" fill="#2a1a00"/></svg>
<span class="t" style="left:112.5px;top:159.7px;font-size:24px;color:#000;letter-spacing:-0.53px;">ConsoleReading.java</span>
<div class="a" style="left:382.5px;top:143.5px;width:298.5px;height:50.6px;background:#fff;border-radius:9px 10px 0 0;border:1px solid #c9d4e3;border-bottom:none;"></div>
<svg class="a" style="left:389px;top:154px" width="34" height="34" viewBox="389 154 34 34"><defs><linearGradient id="gPage" x1="0" y1="0" x2="1" y2="1"><stop offset="0" stop-color="#ffffff"/><stop offset="1" stop-color="#dfe5f2"/></linearGradient></defs><path d="M398,157 H412 L418,163 V183 H398 Z" fill="url(#gPage)" stroke="#a8893c" stroke-width="2" stroke-linejoin="miter"/><path d="M412,157 V163 H418 Z" fill="#e8d3a0" stroke="#a8893c" stroke-width="1"/><path d="M409.3,162 V172 Q409.3,176.8 402.8,176.2" stroke="#2d6aa8" stroke-width="4" fill="none"/></svg>
<span class="t" style="left:431.0px;top:159.7px;font-size:24px;color:#000;letter-spacing:-0.51px;">ReadingDemo.java</span>
<svg class="a" style="left:643px;top:159px" width="21" height="21" viewBox="643 159 21 21"><path d="M645,163.6 L647.6,161 L653.5,166.2 L659.4,161 L662,163.6 L656.8,169.5 L662,175.4 L659.4,178 L653.5,172.8 L647.6,178 L645,175.4 L650.2,169.5 Z" fill="#fff" stroke="#7b7b7b" stroke-width="1.2" stroke-linejoin="round"/></svg>
<svg class="a" style="left:1618px;top:154px" width="62" height="22" viewBox="1618 154 62 22"><rect x="1619.75" y="155.75" width="17.5" height="6" fill="#fff" stroke="#707070" stroke-width="1.5"/><rect x="1658.75" y="155.75" width="17.5" height="18" fill="#fff" stroke="#707070" stroke-width="1.5"/><path d="M1658.75,160.5 H1676.25" stroke="#707070" stroke-width="1.5"/></svg>
<div class="a" style="left:68px;top:198px;width:24px;height:1488px;background:#f7f7f7;"></div>
<div class="a" style="left:68px;top:1652px;width:84px;height:34px;background:#f7f7f7;"></div>
<div class="a" style="left:68px;top:286px;width:24px;height:880px;background:#8ec2fa;background-image:conic-gradient(#2389f5 25%,#f4f9ff 0 50%,#2389f5 0 75%,#f4f9ff 0);background-size:4px 4px;border-top:2px solid #3d98f6;border-bottom:2px solid #3d98f6;"></div>
<div class="a" style="left:151px;top:198px;width:1px;height:1454px;background:#f2f2f2;"></div>
<div class="a" style="left:156px;top:1166px;width:1483px;height:44px;background:#E8F2FE;"></div>
<div class="a" style="left:156px;top:1166px;width:4px;height:44px;background:#000;"></div>
<div class="ln" style="top:201px">1</div>
<div class="code" style="top:201px"><span class="k">import</span> java.io.*;</div>
<div class="ln" style="top:245px">2</div>
<div class="ln" style="top:289px">3</div>
<div class="code" style="top:289px"><span class="k">public</span> <span class="k">class</span> ReadingDemo {</div>
<div class="ln" style="top:333px">4</div>
<div class="ln" style="top:377px">5</div>
<div class="code" style="top:377px">    <span class="k">public</span> <span class="k">static</span> <span class="k">void</span> main(String[] <span class="v">args</span>) <span class="k">throws</span> IOException {</div>
<div class="ln" style="top:421px">6</div>
<div class="ln" style="top:465px">7</div>
<div class="code" style="top:465px">        BufferedInputStream <span class="v">read</span> = <span class="k">new</span> BufferedInputStream(System.<span class="f">in</span>);</div>
<div class="ln" style="top:509px">8</div>
<div class="ln" style="top:553px">9</div>
<div class="code" style="top:553px">        <span class="k">try</span> {</div>
<div class="ln" style="top:597px">10</div>
<div class="code" style="top:597px">            System.<span class="f">out</span>.print(<span class="s">"Enter any character: "</span>);</div>
<div class="ln" style="top:641px">11</div>
<div class="code" style="top:641px">            <span class="k">char</span> <span class="v">c</span> = (<span class="k">char</span>)<span class="v">read</span>.read();</div>
<div class="ln" style="top:685px">12</div>
<div class="code" style="top:685px">            System.<span class="f">out</span>.println(<span class="s">"You have entered '"</span> + <span class="v">c</span> + <span class="s">"'"</span>);</div>
<div class="ln" style="top:729px">13</div>
<div class="code" style="top:729px">        }</div>
<div class="ln" style="top:773px">14</div>
<div class="code" style="top:773px">        <span class="k">catch</span>(Exception <span class="v">e</span>) {</div>
<div class="ln" style="top:817px">15</div>
<div class="code" style="top:817px">            System.<span class="f">out</span>.println(<span class="v">e</span>);</div>
<div class="ln" style="top:861px">16</div>
<div class="code" style="top:861px">        }</div>
<div class="ln" style="top:905px">17</div>
<div class="code" style="top:905px">        <span class="k">finally</span> {</div>
<div class="ln" style="top:949px">18</div>
<div class="code" style="top:949px">            <span class="v">read</span>.close();</div>
<div class="ln" style="top:993px">19</div>
<div class="code" style="top:993px">        }</div>
<div class="ln" style="top:1037px">20</div>
<div class="code" style="top:1037px">    }</div>
<div class="ln" style="top:1081px">21</div>
<div class="ln" style="top:1125px">22</div>
<div class="code" style="top:1125px">}</div>
<div class="ln" style="top:1169px">23</div>
<svg class="a" style="left:131.5px;top:385.5px" width="20" height="20" viewBox="131.5 385.5 20 20"><circle cx="141.0" cy="395.0" r="7.7" fill="#e9f0f9" stroke="#a9b7cc" stroke-width="1.6"/><path d="M136.2,395.0 H145.8" stroke="#33457a" stroke-width="1.8"/></svg>
<div class="a" style="left:1639px;top:198px;width:33px;height:1488px;background:#f0f0f0;"></div>
<div class="a" style="left:1672px;top:198px;width:26px;height:1488px;background:#f7f7f7;"></div>
<div class="a" style="left:152px;top:1652px;width:1520px;height:34px;background:#f0f0f0;"></div>
<svg class="a" style="left:152px;top:198px" width="1520" height="1488" viewBox="152 198 1520 1488"><polygon points="1649.9,220.2 1655.5,214.6 1661.1,220.2 1661.1,216.5 1655.5,211 1649.9,216.5" fill="#c1c1c1"/><polygon points="1649.9,1629.8 1655.5,1635.4 1661.1,1629.8 1661.1,1633.5 1655.5,1639 1649.9,1633.5" fill="#c1c1c1"/><polygon points="174.2,1663.4 168.6,1669.0 174.2,1674.6 170.5,1674.6 165,1669.0 170.5,1663.4" fill="#c1c1c1"/><polygon points="1615.8,1663.4 1621.4,1669.0 1615.8,1674.6 1619.5,1674.6 1625,1669.0 1619.5,1663.4" fill="#c1c1c1"/></svg>
<div class="a" style="left:1712px;top:142px;width:962px;height:1550px;background:#fff;border-radius:9px 9px 8px 8px;overflow:hidden;"><div class="a" style="left:0px;top:0px;width:962px;height:51px;background:linear-gradient(#f6f8fd,#f1f4fb);"></div></div>
<div class="a" style="left:1712px;top:143px;width:185px;height:50px;background:linear-gradient(#dfe6f1 0px,#e6ecf5 40%,#f7f9fd 100%);border-radius:14px 14px 0 0;"></div>
<svg class="a" style="left:1725px;top:155px" width="30" height="30" viewBox="1725 155 30 30"><rect x="1727.5" y="157.5" width="23" height="19" rx="2" fill="#f4f8fe" stroke="#2f5fae" stroke-width="3"/><rect x="1729.5" y="159.5" width="19" height="15" fill="none" stroke="#8fb0dc" stroke-width="1"/><path d="M1732,164.5 H1741 M1732,168.5 H1745" stroke="#27407e" stroke-width="2"/><rect x="1735" y="178" width="8" height="2.5" fill="#2f5fae"/><rect x="1728" y="180" width="22" height="2.4" fill="#2f5fae"/></svg>
<span class="t" style="left:1762.5px;top:159.7px;font-size:24px;color:#000;letter-spacing:-0.65px;">Console</span>
<svg class="a" style="left:1861px;top:159px" width="21" height="21" viewBox="1861 159 21 21"><path d="M1863,163.6 L1865.6,161 L1871.5,166.2 L1877.4,161 L1880,163.6 L1874.8,169.5 L1880,175.4 L1877.4,178 L1871.5,172.8 L1865.6,178 L1863,175.4 L1868.2,169.5 Z" fill="#fff" stroke="#7b7b7b" stroke-width="1.2" stroke-linejoin="round"/></svg>
<svg class="a" style="left:2070px;top:140px" width="520" height="50" viewBox="2070 140 520 50"><defs>
<linearGradient id="gGreen" x1="0" y1="0" x2="0" y2="1"><stop offset="0" stop-color="#7fbf7a"/><stop offset=".5" stop-color="#4f9c50"/><stop offset="1" stop-color="#3b8a42"/></linearGradient>
<linearGradient id="gWin" x1="0" y1="0" x2="1" y2="1"><stop offset="0" stop-color="#dcebfb"/><stop offset="1" stop-color="#ffffff"/></linearGradient>
<linearGradient id="gYel" x1="0" y1="0" x2="0" y2="1"><stop offset="0" stop-color="#fffbe8"/><stop offset="1" stop-color="#fbd98a"/></linearGradient>
<linearGradient id="gYelH" x1="0" y1="0" x2="1" y2="0"><stop offset="0" stop-color="#fff6d8"/><stop offset="1" stop-color="#fbd98a"/></linearGradient>
<linearGradient id="gFold" x1="0" y1="0" x2="0" y2="1"><stop offset="0" stop-color="#fdebb8"/><stop offset="1" stop-color="#f5cd7d"/></linearGradient>
<linearGradient id="gGray" x1="0" y1="0" x2="0" y2="1"><stop offset="0" stop-color="#f1f1f1"/><stop offset="1" stop-color="#d9d9d9"/></linearGradient>
<linearGradient id="gBlueT" x1="0" y1="0" x2="0" y2="1"><stop offset="0" stop-color="#6ea3dc"/><stop offset="1" stop-color="#2f6db8"/></linearGradient>
<radialGradient id="gPkg" cx=".5" cy=".5" r=".75"><stop offset="0" stop-color="#fbe6ae"/><stop offset="1" stop-color="#d9a86c"/></radialGradient>
<linearGradient id="gGold" x1="0" y1="0" x2="1" y2="1"><stop offset="0" stop-color="#d9ac3c"/><stop offset="1" stop-color="#c08a1e"/></linearGradient>
<radialGradient id="gPurp" cx=".4" cy=".3" r=".8"><stop offset="0" stop-color="#9a8ad0"/><stop offset="1" stop-color="#4d3a8c"/></radialGradient>
<radialGradient id="gGrnB" cx=".4" cy=".3" r=".8"><stop offset="0" stop-color="#8fd08a"/><stop offset="1" stop-color="#2a7d34"/></radialGradient>
<linearGradient id="gPil" x1="0" y1="0" x2="0" y2="1"><stop offset="0" stop-color="#6e97cc"/><stop offset="1" stop-color="#2d62ad"/></linearGradient>
</defs><rect x="2082" y="156" width="20" height="20" rx="3" fill="#e0e0e0" stroke="#b2b2b2" stroke-width="2"/><rect x="2085.5" y="159.5" width="13" height="13" fill="#a9a9a9"/><path d="M2122.5,156.5 L2139.5,173.5 M2139.5,156.5 L2122.5,173.5" stroke="#7c7c7c" stroke-width="9.7" stroke-linecap="round"/><path d="M2122.5,156.5 L2139.5,173.5 M2139.5,156.5 L2122.5,173.5" stroke="#8b8b8b" stroke-width="7.5" stroke-linecap="round"/><path d="M2158.5,152.5 L2173.5,167 M2173.5,152.5 L2158.5,167" stroke="#555" stroke-width="7.2" stroke-linecap="round"/><path d="M2158.5,152.5 L2173.5,167 M2173.5,152.5 L2158.5,167" stroke="#d6d6d6" stroke-width="5" stroke-linecap="round"/><path d="M2167,163 L2181,177 M2181,163 L2167,177" stroke="#4f4f4f" stroke-width="7.8" stroke-linecap="round"/><path d="M2167,163 L2181,177 M2181,163 L2167,177" stroke="#858585" stroke-width="5.6" stroke-linecap="round"/><rect x="2190.7" y="148" width="1.8" height="34" fill="#8d8da0"/><path d="M2203,150 H2217 L2223,156 V175.5 H2203 Z" fill="#f4f6fb" stroke="#c5b283" stroke-width="2"/><path d="M2217,150 V156 H2223" fill="#ecdcae" stroke="#c5b283" stroke-width="1.4"/><path d="M2206,156 H2214 M2206,160 H2219 M2206,164 H2219 M2206,168 H2215 M2206,172 H2214" stroke="#4f74b6" stroke-width="2"/><path d="M2221,168 L2229,176 M2229,168 L2221,176" stroke="#3c3c3c" stroke-width="5.800000000000001" stroke-linecap="round"/><path d="M2221,168 L2229,176 M2229,168 L2221,176" stroke="#5a5a5a" stroke-width="3.6" stroke-linecap="round"/><rect x="2244" y="152" width="26" height="26" fill="#edf4fd" stroke="#8b97b8" stroke-width="2"/><rect x="2243" y="151" width="28" height="2.4" fill="#c2ae7c"/><rect x="2262.5" y="153" width="7.5" height="25" fill="#dfe6f3" stroke="#7f8db4" stroke-width="1.4"/><rect x="2264.8" y="155" width="3" height="3" fill="#3f5fa8"/><rect x="2264.8" y="172.5" width="3" height="3" fill="#3f5fa8"/><rect x="2263.2" y="161" width="6.2" height="8" fill="#c5cfe6"/><path d="M2244.5,167 V163.5 Q2244.5,158.5 2249,158.5 Q2253.5,158.5 2253.5,163.5 V167" stroke="#b98220" stroke-width="2.6" fill="none"/><rect x="2241.5" y="166.5" width="15" height="13.5" rx="1.6" fill="#e9b44a" stroke="#b0771c" stroke-width="1.6"/><path d="M2242.5,171 H2255.5 M2242.5,175 H2255.5" stroke="#f6d98e" stroke-width="1.4"/><circle cx="2249" cy="171.8" r="1.5" fill="#3a2608"/><rect x="2248.3" y="172" width="1.4" height="4" fill="#3a2608"/><g opacity=".75"><path d="M2281,150 H2295 L2301,156 V176 H2281 Z" fill="#f3f5fa" stroke="#cdbd92" stroke-width="2"/><path d="M2284,156 H2296 M2284,160 H2294 M2284,164 H2292 M2284,168 H2288 M2284,172 H2288" stroke="#6f8cc4" stroke-width="2"/><path d="M2307,154.5 V168.5 H2300" stroke="#d9b25e" stroke-width="5.6" fill="none" stroke-linejoin="round" stroke-linecap="round"/><polygon points="2291.5,168.5 2300,161.5 2300,175.5" fill="#d9b25e" stroke="#d9b25e" stroke-width="2" stroke-linejoin="round"/><path d="M2307,154.5 V168.5 H2299" stroke="#fdf0c8" stroke-width="2" fill="none" stroke-linecap="round"/><polygon points="2294.5,168.5 2299.2,164.6 2299.2,172.4" fill="#fdf0c8"/></g><rect x="2314.5" y="146.5" width="38.5" height="36" fill="#c2ddf9" stroke="#88c0f8" stroke-width="1"/><rect x="2353" y="146.5" width="38.5" height="36" fill="#c2ddf9" stroke="#88c0f8" stroke-width="1"/><polygon points="2328,167.5 2350,167.5 2344,173.5 2332,175.5" fill="#8d9bb2" opacity=".55"/><rect x="2321.2" y="163.7" width="11.6" height="9.6" fill="#dbe7f7" stroke="#4377c4" stroke-width="2.4"/><rect x="2324" y="173.5" width="7" height="2.5" fill="#4377c4"/><rect x="2322" y="176.1" width="10.5" height="2.4" fill="#4377c4"/><rect x="2327.2" y="151.7" width="21.4" height="15.4" fill="#eef4fd" stroke="#4377c4" stroke-width="2.4"/><path d="M2331,157.5 H2341.5 M2331,161.5 H2345.5" stroke="#5873b4" stroke-width="2"/><polygon points="2367,167.5 2389,167.5 2383,173.5 2371,175.5" fill="#8d9bb2" opacity=".55"/><rect x="2360.2" y="163.7" width="11.6" height="9.6" fill="#dbe7f7" stroke="#4377c4" stroke-width="2.4"/><rect x="2363" y="173.5" width="7" height="2.5" fill="#4377c4"/><rect x="2361" y="176.1" width="10.5" height="2.4" fill="#4377c4"/><rect x="2366.2" y="151.7" width="21.4" height="15.4" fill="#eef4fd" stroke="#4377c4" stroke-width="2.4"/><path d="M2369.2,155.1 L2377.2,163.7 M2377.2,155.1 L2369.2,163.7" stroke="#e03a3a" stroke-width="3.4" stroke-linecap="round"/><path d="M2380.5,157.5 H2384.8 M2380.5,161.5 H2384.8" stroke="#5873b4" stroke-width="2"/><rect x="2393.7" y="148" width="1.8" height="34" fill="#6f7080"/><rect x="2408" y="160" width="24" height="18" fill="#f3f7fd" stroke="#a9a08a" stroke-width="2"/><rect x="2407" y="159" width="26" height="5" fill="url(#gBlueT)"/><path d="M2421,169 L2426,174" stroke="#b7b7b7" stroke-width="2.2" opacity=".7"/><path d="M2420,168.6 L2424,164.6" stroke="#23346e" stroke-width="2.6"/><g transform="translate(2428.6,159.2) rotate(40) scale(.8)"><rect x="-6.5" y="-9.5" width="13" height="5.6" rx="2.8" fill="#3fb54a" stroke="#1f8f2c" stroke-width="1.2"/><rect x="-4" y="-4.5" width="8" height="7" fill="#2f9c3a"/><rect x="-7.5" y="2" width="15" height="5" rx="2.5" fill="#3fb54a" stroke="#1f8f2c" stroke-width="1.2"/></g><rect x="2448.5" y="152.5" width="23" height="19" rx="2" fill="#f4f8fe" stroke="#2f5fae" stroke-width="3"/><rect x="2450.5" y="154.5" width="19" height="15" fill="none" stroke="#8fb0dc" stroke-width="1"/><path d="M2453,159.5 H2462 M2453,163.5 H2466" stroke="#27407e" stroke-width="2"/><rect x="2456" y="173" width="8" height="2.5" fill="#2f5fae"/><rect x="2449" y="175" width="22" height="2.4" fill="#2f5fae"/><polygon points="2486,161 2500,161 2493.0,169.5" fill="#222"/><rect x="2516" y="156" width="26" height="22" fill="url(#gWin)" stroke="#b49a62" stroke-width="2"/><rect x="2515" y="155" width="28" height="5" fill="url(#gBlueT)"/><path d="M2539,164 Q2538,176 2523,177" stroke="#f7dc9a" stroke-width="2.5" fill="none" opacity=".65"/><polygon points="2538,150.6 2545.4,158 2538,165.4 2530.6,158" fill="url(#gGold)" stroke="#b8860b" stroke-width="1.4" stroke-linejoin="round"/><path d="M2538,153.2V162.8M2533.2,158H2542.8" stroke="#fffbe8" stroke-width="2.2" fill="none"/><polygon points="2556,161 2570,161 2563.0,169.5" fill="#222"/></svg>
<svg class="a" style="left:2588px;top:154px" width="62" height="22" viewBox="2588 154 62 22"><rect x="2589.75" y="155.75" width="17.5" height="6" fill="#fff" stroke="#707070" stroke-width="1.5"/><rect x="2628.75" y="155.75" width="17.5" height="18" fill="#fff" stroke="#707070" stroke-width="1.5"/><path d="M2628.75,160.5 H2646.25" stroke="#707070" stroke-width="1.5"/></svg>
<span class="t" style="left:1721.0px;top:203.7px;font-size:24px;color:#000;letter-spacing:-0.10px;">&lt;terminated&gt; ReadingDemo [Java Application] C:\Program Files\Java\jre1.8.0_201\bin\jav</span>
<div class="a" style="left:1718px;top:230px;width:952px;height:1px;background:#707070;"></div>
<div class="code" style="left:1722px;top:235px">Enter any character: <span style="color:#00C87D">G</span></div>
<div class="code" style="left:1722px;top:279px">You have entered 'G'</div>
<div class="a" style="left:2635px;top:232px;width:33px;height:1454px;background:#f0f0f0;"></div>
<div class="a" style="left:1718px;top:1653px;width:950px;height:33px;background:#f0f0f0;"></div>
<svg class="a" style="left:1718px;top:232px" width="950" height="1454" viewBox="1718 232 950 1454"><polygon points="2645.9,254.2 2651.5,248.6 2657.1,254.2 2657.1,250.5 2651.5,245 2645.9,250.5" fill="#c1c1c1"/><polygon points="2645.9,1630.8 2651.5,1636.4 2657.1,1630.8 2657.1,1634.5 2651.5,1640 2645.9,1634.5" fill="#c1c1c1"/><polygon points="1740.2,1663.9 1734.6,1669.5 1740.2,1675.1 1736.5,1675.1 1731,1669.5 1736.5,1663.9" fill="#c1c1c1"/><polygon points="2611.8,1663.9 2617.4,1669.5 2611.8,1675.1 2615.5,1675.1 2621,1669.5 2615.5,1663.9" fill="#c1c1c1"/></svg>
<svg class="a" style="left:2674px;top:140px" width="62" height="294" viewBox="2674 140 62 294"><defs><linearGradient id="gPage" x1="0" y1="0" x2="1" y2="1"><stop offset="0" stop-color="#ffffff"/><stop offset="1" stop-color="#dfe5f2"/></linearGradient></defs><defs>
<linearGradient id="gGreen" x1="0" y1="0" x2="0" y2="1"><stop offset="0" stop-color="#7fbf7a"/><stop offset=".5" stop-color="#4f9c50"/><stop offset="1" stop-color="#3b8a42"/></linearGradient>
<linearGradient id="gWin" x1="0" y1="0" x2="1" y2="1"><stop offset="0" stop-color="#dcebfb"/><stop offset="1" stop-color="#ffffff"/></linearGradient>
<linearGradient id="gYel" x1="0" y1="0" x2="0" y2="1"><stop offset="0" stop-color="#fffbe8"/><stop offset="1" stop-color="#fbd98a"/></linearGradient>
<linearGradient id="gYelH" x1="0" y1="0" x2="1" y2="0"><stop offset="0" stop-color="#fff6d8"/><stop offset="1" stop-color="#fbd98a"/></linearGradient>
<linearGradient id="gFold" x1="0" y1="0" x2="0" y2="1"><stop offset="0" stop-color="#fdebb8"/><stop offset="1" stop-color="#f5cd7d"/></linearGradient>
<linearGradient id="gGray" x1="0" y1="0" x2="0" y2="1"><stop offset="0" stop-color="#f1f1f1"/><stop offset="1" stop-color="#d9d9d9"/></linearGradient>
<linearGradient id="gBlueT" x1="0" y1="0" x2="0" y2="1"><stop offset="0" stop-color="#6ea3dc"/><stop offset="1" stop-color="#2f6db8"/></linearGradient>
<radialGradient id="gPkg" cx=".5" cy=".5" r=".75"><stop offset="0" stop-color="#fbe6ae"/><stop offset="1" stop-color="#d9a86c"/></radialGradient>
<linearGradient id="gGold" x1="0" y1="0" x2="1" y2="1"><stop offset="0" stop-color="#d9ac3c"/><stop offset="1" stop-color="#c08a1e"/></linearGradient>
<radialGradient id="gPurp" cx=".4" cy=".3" r=".8"><stop offset="0" stop-color="#9a8ad0"/><stop offset="1" stop-color="#4d3a8c"/></radialGradient>
<radialGradient id="gGrnB" cx=".4" cy=".3" r=".8"><stop offset="0" stop-color="#8fd08a"/><stop offset="1" stop-color="#2a7d34"/></radialGradient>
<linearGradient id="gPil" x1="0" y1="0" x2="0" y2="1"><stop offset="0" stop-color="#6e97cc"/><stop offset="1" stop-color="#2d62ad"/></linearGradient>
</defs><path d="M2677.0,143.0 H2735.0 V313.0 Q2735.0,323.0 2725.0,323.0 H2687.0 Q2677.0,323.0 2677.0,313.0 Z" fill="#e0e5f6" stroke="#adb3c9" stroke-width="2"/><path d="M2679,145 H2733 V313 Q2733,321 2725,321 H2687 Q2679,321 2679,313 Z" fill="none" stroke="#fff" stroke-width="2"/><path d="M2677.0,325.0 H2735.0 V419.0 Q2735.0,429.0 2725.0,429.0 H2687.0 Q2677.0,429.0 2677.0,419.0 Z" fill="#e0e5f6" stroke="#adb3c9" stroke-width="2"/><path d="M2679,327 H2733 V419 Q2733,427 2725,427 H2687 Q2679,427 2679,419 Z" fill="none" stroke="#fff" stroke-width="2"/><rect x="2691" y="154" width="6" height="6.5" fill="#f1f0ee" opacity=".8"/><rect x="2692" y="155" width="4" height="4.6" fill="#a39886"/><rect x="2692" y="155" width="2" height="2.3" fill="#c9c0b2"/><rect x="2699" y="154" width="6" height="6.5" fill="#f1f0ee" opacity=".8"/><rect x="2700" y="155" width="4" height="4.6" fill="#a39886"/><rect x="2700" y="155" width="2" height="2.3" fill="#c9c0b2"/><rect x="2707" y="154" width="6" height="6.5" fill="#f1f0ee" opacity=".8"/><rect x="2708" y="155" width="4" height="4.6" fill="#a39886"/><rect x="2708" y="155" width="2" height="2.3" fill="#c9c0b2"/><rect x="2715" y="154" width="6" height="6.5" fill="#f1f0ee" opacity=".8"/><rect x="2716" y="155" width="4" height="4.6" fill="#a39886"/><rect x="2716" y="155" width="2" height="2.3" fill="#c9c0b2"/><rect x="2702.5" y="174.5" width="10" height="8" fill="#eef1fa" stroke="#6b625a" stroke-width="2"/><rect x="2701.5" y="173" width="12" height="3" fill="#6b625a"/><rect x="2698" y="180.5" width="10" height="8" fill="#eef1fa" stroke="#6b625a" stroke-width="2"/><rect x="2697" y="179" width="12" height="3" fill="#6b625a"/><path d="M2690,220 V204 H2711 Q2716.5,204 2716,211 Q2715.5,216 2713,220 Q2711,225 2714,229 L2717.5,232 H2704" fill="#dcebf8" stroke="#8e9ab8" stroke-width="1.6"/><path d="M2690,221 V204 H2708" fill="none" stroke="#b5a06a" stroke-width="2"/><path d="M2706.5,205 V231 M2704,217.5 H2714" stroke="#a9bcd8" stroke-width="1.6"/><path d="M2704,232 H2718" stroke="#5d6a92" stroke-width="1.8"/><circle cx="2700.5" cy="211.8" r="5.4" fill="#d9262e" stroke="#c41a22" stroke-width="1"/><path d="M2698,214 H2703" stroke="#f08a8a" stroke-width="1" opacity=".8"/><rect x="2688.5" y="218.5" width="15.5" height="16.5" fill="#fff"/><rect x="2689" y="219.5" width="14" height="15.2" fill="#d6353f"/><path d="M2692.2,223.2 L2699.8,231 M2699.8,223.2 L2692.2,231" stroke="#fff" stroke-width="3"/><text x="2694.8" y="263.4" font-family="Liberation Serif, serif" font-weight="bold" font-style="italic" font-size="22.5" fill="#1f5fa0" textLength="20.4" lengthAdjust="spacingAndGlyphs">@</text><path d="M2692,280 H2706 L2712,286 V305.7 H2692 Z" fill="url(#gPage)" stroke="#a8893c" stroke-width="2"/><path d="M2706,280 V286 H2712 Z" fill="#e8d3a0" stroke="#a8893c" stroke-width="1"/><path d="M2700.5,285.5 Q2697.5,285.5 2697.5,288.5 V291 Q2697.5,293 2695,293 Q2697.5,293 2697.5,295 V297.5 Q2697.5,300.5 2700.5,300.5" stroke="#1f5fa0" stroke-width="2" fill="none"/><path d="M2701,291 H2707 M2701,295.5 H2707" stroke="#1f5fa0" stroke-width="2.2"/><path d="M2702.8,299.8 H2710 V296.8 L2718.6,303.2 L2710,309.8 V306.6 H2702.8 Z" fill="url(#gYelH)" stroke="#c07c10" stroke-width="2" stroke-linejoin="round"/><rect x="2691" y="336" width="6" height="6.5" fill="#f1f0ee" opacity=".8"/><rect x="2692" y="337" width="4" height="4.6" fill="#a39886"/><rect x="2692" y="337" width="2" height="2.3" fill="#c9c0b2"/><rect x="2699" y="336" width="6" height="6.5" fill="#f1f0ee" opacity=".8"/><rect x="2700" y="337" width="4" height="4.6" fill="#a39886"/><rect x="2700" y="337" width="2" height="2.3" fill="#c9c0b2"/><rect x="2707" y="336" width="6" height="6.5" fill="#f1f0ee" opacity=".8"/><rect x="2708" y="337" width="4" height="4.6" fill="#a39886"/><rect x="2708" y="337" width="2" height="2.3" fill="#c9c0b2"/><rect x="2715" y="336" width="6" height="6.5" fill="#f1f0ee" opacity=".8"/><rect x="2716" y="337" width="4" height="4.6" fill="#a39886"/><rect x="2716" y="337" width="2" height="2.3" fill="#c9c0b2"/><rect x="2702.5" y="356.5" width="10" height="8" fill="#eef1fa" stroke="#6b625a" stroke-width="2"/><rect x="2701.5" y="355" width="12" height="3" fill="#6b625a"/><rect x="2698" y="362.5" width="10" height="8" fill="#eef1fa" stroke="#6b625a" stroke-width="2"/><rect x="2697" y="361" width="12" height="3" fill="#6b625a"/><path d="M2696,388 H2710 L2716,394 V414 H2696 Z" fill="url(#gPage)" stroke="#a8893c" stroke-width="2" stroke-linejoin="miter"/><path d="M2710,388 V394 H2716 Z" fill="#e8d3a0" stroke="#a8893c" stroke-width="1"/><path d="M2707.3,393 V403 Q2707.3,407.8 2700.8,407.2" stroke="#2d6aa8" stroke-width="4" fill="none"/></svg>
<div class="a" style="left:1368px;top:1692px;width:1px;height:44px;background:#a0a4b4;"></div>
<div class="a" style="left:1604px;top:1692px;width:1px;height:44px;background:#a0a4b4;"></div>
<div class="a" style="left:1826px;top:1692px;width:1px;height:44px;background:#a0a4b4;"></div>
<span class="t" style="left:1382.5px;top:1703.7px;font-size:24px;color:#000;letter-spacing:0.05px;">Writable</span>
<span class="t" style="left:1619.0px;top:1703.7px;font-size:24px;color:#000;letter-spacing:-0.31px;">Smart Insert</span>
<span class="t" style="left:1841.0px;top:1703.7px;font-size:24px;color:#000;letter-spacing:-0.42px;">23 : 1 : 435</span>
<svg class="a" style="left:2040px;top:1700px" width="12" height="34" viewBox="2040 1700 12 34"><rect x="2044" y="1704" width="4" height="4" fill="#a39886"/><rect x="2044" y="1704" width="2.0" height="2.0" fill="#c9c0b2"/><rect x="2044" y="1711" width="4" height="4" fill="#a39886"/><rect x="2044" y="1711" width="2.0" height="2.0" fill="#c9c0b2"/><rect x="2044" y="1719" width="4" height="4" fill="#a39886"/><rect x="2044" y="1719" width="2.0" height="2.0" fill="#c9c0b2"/><rect x="2044" y="1726" width="4" height="4" fill="#a39886"/><rect x="2044" y="1726" width="2.0" height="2.0" fill="#c9c0b2"/></svg><svg class="a" style="left:2680px;top:1696px" width="56" height="44" viewBox="2680 1696 56 44"><defs><radialGradient id="gBulb" cx=".5" cy=".7" r=".7"><stop offset="0" stop-color="#ffffff"/><stop offset=".45" stop-color="#fff6c8"/><stop offset="1" stop-color="#fbe08a"/></radialGradient><radialGradient id="gGlow" cx=".5" cy=".5" r=".5"><stop offset=".6" stop-color="#f6f0b0" stop-opacity=".7"/><stop offset="1" stop-color="#f6f0b0" stop-opacity="0"/></radialGradient></defs><rect x="2688" y="1704" width="4" height="4" fill="#a39886"/><rect x="2688" y="1704" width="2.0" height="2.0" fill="#c9c0b2"/><rect x="2688" y="1711" width="4" height="4" fill="#a39886"/><rect x="2688" y="1711" width="2.0" height="2.0" fill="#c9c0b2"/><rect x="2688" y="1719" width="4" height="4" fill="#a39886"/><rect x="2688" y="1719" width="2.0" height="2.0" fill="#c9c0b2"/><rect x="2688" y="1726" width="4" height="4" fill="#a39886"/><rect x="2688" y="1726" width="2.0" height="2.0" fill="#c9c0b2"/><circle cx="2716" cy="1712.5" r="12.5" fill="url(#gGlow)"/><path d="M2711.5,1723.5 L2709.6,1717.5 Q2707.6,1715 2707.6,1711.8 A8.4,8.4 0 0 1 2724.4,1711.8 Q2724.4,1715 2722.4,1717.5 L2720.5,1723.5 Z" fill="url(#gBulb)" stroke="#f0a024" stroke-width="2.6" stroke-linejoin="round"/><path d="M2709.8,1717.6 L2711.6,1723 M2722.2,1717.6 L2720.4,1723" stroke="#f5c518" stroke-width="2.4"/><rect x="2711.6" y="1723.4" width="8.8" height="7.2" rx="1" fill="#dfe4ea" stroke="#5f7394" stroke-width="1.8"/><rect x="2713.2" y="1730.6" width="5.6" height="2.6" fill="#2f4f8c"/></svg>
</div>
</body></html>
